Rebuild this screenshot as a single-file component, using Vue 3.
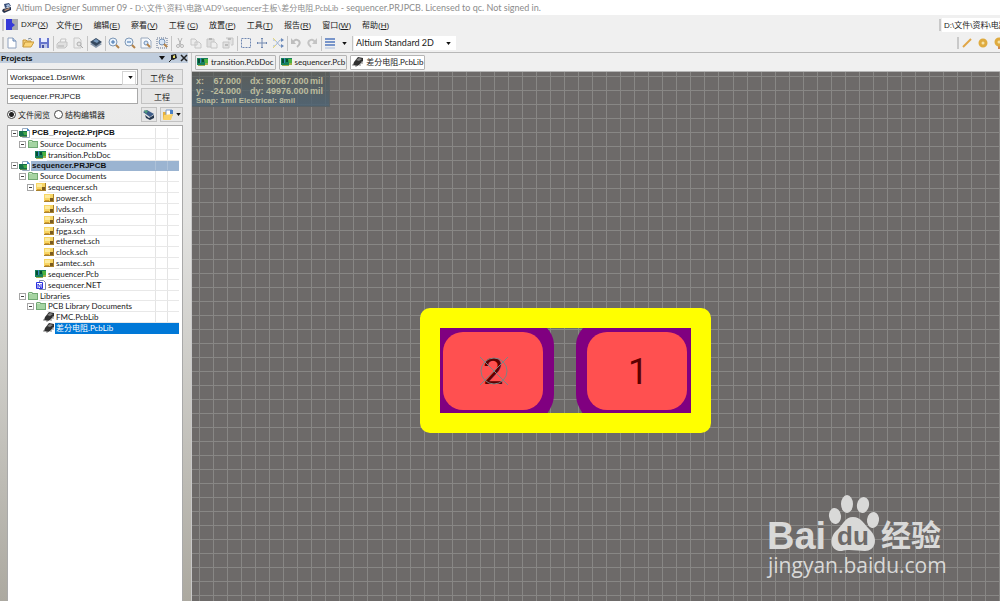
<script setup>
import { ref } from 'vue'

const menus = [
  ['DXP(', 'X', ')'], ['文件(', 'F', ')'], ['编辑(', 'E', ')'], ['察看(', 'V', ')'], ['工程 (', 'C', ')'],
  ['放置(', 'P', ')'], ['工具(', 'T', ')'], ['报告(', 'R', ')'], ['窗口(', 'W', ')'], ['帮助(', 'H', ')'],
]

const toolGroups = [
  [['new', 'New'], ['open', 'Open'], ['save', 'Save']],
  [['print', 'Print'], ['preview', 'Print preview']],
  [['layers', 'Layers']],
  [['zoomin', 'Zoom in'], ['zoomout', 'Zoom out'], ['zoomdoc', 'Fit document'], ['zoomarea', 'Fit area']],
  [['cut', 'Cut'], ['copy', 'Copy'], ['paste', 'Paste'], ['stamp', 'Rubber stamp']],
  [['select', 'Select area'], ['move', 'Move'], ['shuffle', 'Clear filter']],
  [['undo', 'Undo'], ['redo', 'Redo']],
]

const docs = [
  { icon: 'board', name: 'transition.PcbDoc' },
  { icon: 'board', name: 'sequencer.Pcb' },
  { icon: 'chip', name: '差分电阻.PcbLib', active: true },
]

const tree = [
  { level: 0, icon: 'project', name: 'PCB_Project2.PrjPCB', open: true, bold: true },
  { level: 1, icon: 'folder', name: 'Source Documents', open: true },
  { level: 2, icon: 'board', name: 'transition.PcbDoc' },
  { level: 0, icon: 'project', name: 'sequencer.PRJPCB', open: true, bold: true, current: true },
  { level: 1, icon: 'folder', name: 'Source Documents', open: true },
  { level: 2, icon: 'sheet', name: 'sequencer.sch', open: true },
  { level: 3, icon: 'sheet', name: 'power.sch' },
  { level: 3, icon: 'sheet', name: 'lvds.sch' },
  { level: 3, icon: 'sheet', name: 'daisy.sch' },
  { level: 3, icon: 'sheet', name: 'fpga.sch' },
  { level: 3, icon: 'sheet', name: 'ethernet.sch' },
  { level: 3, icon: 'sheet', name: 'clock.sch' },
  { level: 3, icon: 'sheet', name: 'samtec.sch' },
  { level: 2, icon: 'board', name: 'sequencer.Pcb' },
  { level: 2, icon: 'net', name: 'sequencer.NET' },
  { level: 1, icon: 'folder', name: 'Libraries', open: true },
  { level: 2, icon: 'folder', name: 'PCB Library Documents', open: true },
  { level: 3, icon: 'chip', name: 'FMC.PcbLib' },
  { level: 3, icon: 'chip', name: '差分电阻.PcbLib', selected: true },
]

const view = ref('file')
const project = ref('sequencer.PRJPCB')
const path = ref('D:\\文件\\资料\\电路\\AD9')

const pitch = 14.04
const columns = Array.from({ length: 180 }, (_, i) => Math.round(7 + i * pitch))
const rows = Array.from({ length: 120 }, (_, i) => Math.round(4 + i * pitch))
</script>

<template>
  <div class="app">
    <svg class="defs" aria-hidden="true">
      <symbol id="board" viewBox="0 0 12 10">
        <path d="M0 1h11v7H0z" fill="#15805a" /><path d="M1 2h2v4H1zM5 2h2v3H5z" fill="#064c32" />
        <path d="M7 2h4v4H8z" fill="#4db33d" /><path d="M1 8h7v1H1zM8 6h3v2H8z" fill="#9fae4b" /><path d="M3 1h1v5H3z" fill="#3d82c0" />
      </symbol>
      <symbol id="project" viewBox="0 0 12 10">
        <path d="M3.500.5h5l2 2v7h-7z" fill="#fff" stroke="#9aabc0" /><path d="M8 0l3 3H8z" fill="#4a8cd0" />
        <path d="M0 3h8v5H0z" fill="#15704a" /><path d="M4 4h4v3H5z" fill="#43a648" /><path d="M1 8h7v1H1z" fill="#5d8a56" />
      </symbol>
      <symbol id="folder" viewBox="0 0 12 10">
        <path d="M1 2l1-1h3l1 1h5v7H1z" fill="#71a873" /><path d="M2 3h8v5H2z" fill="#a5d4a2" /><path d="M2 2h3v1H2z" fill="#cbe8c6" />
      </symbol>
      <symbol id="sheet" viewBox="0 0 12 10">
        <path d="M1 1h10v8H1z" fill="#a9822c" /><path d="M1 1h9v7H1z" fill="#f7d564" /><path d="M2 2h5v3H2z" fill="#fdeb9f" />
        <path d="M7 5h3v3H7z" fill="#7a5b20" /><path d="M2 7h4v1H2z" fill="#d89d2c" />
      </symbol>
      <symbol id="net" viewBox="0 0 12 10">
        <path d="M4.500.5h4l2 2v7h-6z" fill="#fff" stroke="#7f8ca8" /><path d="M1.500 2.500h6v6h-6z" fill="#fff" stroke="#2a31e0" />
        <path d="M3 8V4l3 4V4" fill="none" stroke="#2a31e0" />
      </symbol>
      <symbol id="chip" viewBox="0 0 12 10">
        <path d="M2 5l4-5 5 1v3L7 8l-2 1-4-1z" fill="#303030" /><path d="M4 3l3-2 3 1-3 2z" fill="#858585" />
        <path d="M1 7v2M4 8v2M8 7v2M10 4v3" stroke="#808080" />
      </symbol>
      <symbol id="new" viewBox="0 0 12 12"><path d="M2 1h5l3 3v7H2z" fill="#fff" stroke="#8ea0bd" /><path d="M7 1v3h3" fill="#cdd9ec" stroke="#6b88b5" /></symbol>
      <symbol id="open" viewBox="0 0 12 12"><path d="M1 10V3h3l1 1h4v2" fill="#f4cf78" stroke="#c39337" /><path d="M1 10l2-5h9l-3 5z" fill="#fbd578" stroke="#c99a3d" /><path d="M6 2q3-2 4 1" fill="none" stroke="#7b8b9b" /></symbol>
      <symbol id="save" viewBox="0 0 12 12"><path d="M1 1h10v10H1z" fill="#6876cc" /><path d="M3 1h6v4H3z" fill="#e9edff" /><path d="M3 7h6v4H3z" fill="#bfc6e7" /><path d="M4 8h2v3H4z" fill="#4652a2" /></symbol>
      <symbol id="print" viewBox="0 0 12 12"><path d="M4 6l1-4h5L9 6z" fill="#f5f5f5" stroke="#c4c4c4" /><path d="M1 7l2-2h8v4l-2 2H1z" fill="#e0e0e0" stroke="#c4c4c4" /><path d="M2 9h6" stroke="#b0b0b0" /></symbol>
      <symbol id="preview" viewBox="0 0 12 12"><path d="M2 1h5l2 2v8H2z" fill="#eee" stroke="#c8c8c8" /><circle cx="7" cy="7" r="2" fill="#e4e4e4" stroke="#b0b0b0" /><path d="M8 8l3 3" stroke="#aaa" /></symbol>
      <symbol id="layers" viewBox="0 0 12 12"><path d="M0 7l6 4 6-4-6-3z" fill="#8394a8" /><path d="M0 5l6 4 6-4-6-4z" fill="#35485f" /><path d="M3 4l4 2 2-2-3-2z" fill="#7697ba" /></symbol>
      <symbol id="zoomin" viewBox="0 0 12 12"><circle cx="5" cy="5" r="4" fill="#e9f2fc" stroke="#7e98b6" /><path d="M3 5h4M5 3v4" stroke="#3f70ac" /><path d="M8 8l3 3" stroke="#b4834a" stroke-width="2" /></symbol>
      <symbol id="zoomout" viewBox="0 0 12 12"><circle cx="5" cy="5" r="4" fill="#e9f2fc" stroke="#7e98b6" /><path d="M3 5h4" stroke="#3f70ac" /><path d="M8 8l3 3" stroke="#b4834a" stroke-width="2" /></symbol>
      <symbol id="zoomdoc" viewBox="0 0 12 12"><path d="M1 1h7l3 3v7H1z" fill="#f7f9fc" stroke="#9aa9bd" /><circle cx="6" cy="6" r="2" fill="#dbe8f8" stroke="#6f8fb6" /><path d="M7 7l3 3" stroke="#b4834a" stroke-width="2" /></symbol>
      <symbol id="zoomarea" viewBox="0 0 12 12"><path d="M1 1h10v10H1z" fill="none" stroke="#5c6f8d" stroke-dasharray="1 1" /><circle cx="6" cy="5" r="3" fill="#d6e5f7" stroke="#7693b6" /><path d="M8 7l3 3" stroke="#b4834a" stroke-width="2" /></symbol>
      <symbol id="cut" viewBox="0 0 12 12"><path d="M4 1l3 7M8 1L5 8" stroke="#b5b5b5" /><circle cx="4" cy="9" r="1.500" fill="none" stroke="#b5b5b5" /><circle cx="8" cy="9" r="1.500" fill="none" stroke="#b5b5b5" /></symbol>
      <symbol id="copy" viewBox="0 0 12 12"><path d="M1 2h4l2 2v4H1zM5 5h4l2 2v4H5z" fill="#ececec" stroke="#c6c6c6" /></symbol>
      <symbol id="paste" viewBox="0 0 12 12"><path d="M1 2h7v8H1z" fill="#ddd" stroke="#c6c6c6" /><path d="M3 1h3v2H3z" fill="#b5b5b5" /><path d="M5 5h4l2 2v4H5z" fill="#eee" stroke="#c6c6c6" /></symbol>
      <symbol id="stamp" viewBox="0 0 12 12"><path d="M4 1h7v7H9M1 5h6v6H1z" fill="#e2e2e2" stroke="#c4c4c4" /><path d="M6 1h3v2H6zM3 7h3v2H3z" fill="#bbb" /></symbol>
      <symbol id="select" viewBox="0 0 12 12"><path d="M1.500 1.500h9v9h-9z" fill="none" stroke="#7088b2" stroke-dasharray="2 1" /></symbol>
      <symbol id="move" viewBox="0 0 12 12"><path d="M6 1v10M1 6h10" stroke="#7088b0" /><path d="M5 2l1-1 1 1M5 10l1 1 1-1M2 5L1 6l1 1M10 5l1 1-1 1" fill="none" stroke="#7088b0" /></symbol>
      <symbol id="shuffle" viewBox="0 0 12 12"><path d="M1 3h2l5 6h3M1 9h2l5-6h3" fill="none" stroke="#9db3d5" /><path d="M9 1l3 2-3 2zM9 7l3 2-3 2z" fill="#6b8aba" /><path d="M1 1l3 3M1 11l3-3" stroke="#e7d878" /></symbol>
      <symbol id="undo" viewBox="0 0 12 12"><path d="M3 5q3-4 6-1 2 3-2 6" fill="none" stroke="#bdbdbd" stroke-width="2" /><path d="M1 1v6h5z" fill="#bdbdbd" /></symbol>
      <symbol id="redo" viewBox="0 0 12 12"><path d="M9 5Q6 1 3 4q-2 3 2 6" fill="none" stroke="#c4c4c4" stroke-width="2" /><path d="M11 1v6H6z" fill="#c4c4c4" /></symbol>
      <symbol id="lines" viewBox="0 0 12 12"><path d="M1 2h10M1 5h10M1 8h10" stroke="#7895ca" stroke-width="2" /><path d="M1 11h10" stroke="#aabddd" /></symbol>
      <symbol id="caret" viewBox="0 0 6 4"><path d="M0 0h6L3 4z" fill="#111" /></symbol>
    </svg>

    <header class="title">
      <svg class="logo" viewBox="0 0 12 10" aria-hidden="true"><path d="M2 6l8-2v3l-7 3-2-2z" fill="#26324b" /><path d="M3 1l5-1 2 3-6 2z" fill="#344a74" /><path d="M5 2l3-1 1 2-3 1z" fill="#a6bfe0" /><path d="M3 7l5-2 1 1-5 2z" fill="#c2906f" /></svg>
      <h1>Altium Designer Summer 09 - <span>D:\文件\资料\电路\AD9\sequencer主板\差分电阻.PcbLib</span> - sequencer.PRJPCB. Licensed to qc. Not signed in.</h1>
    </header>

    <nav class="menubar">
      <span class="grip"></span>
      <svg class="dxp" viewBox="0 0 12 11" aria-hidden="true"><path d="M0 0h6v11H0z" fill="#3539d8" /><path d="M6 0h6v11H6z" fill="#a4a7ad" /><path d="M4 2l5 4-5 4z" fill="#3539d8" /></svg>
      <button v-for="m in menus" :key="m[1]" type="button">{{ m[0] }}<u>{{ m[1] }}</u>{{ m[2] }}</button>
      <span class="spring"></span>
      <span class="grip"></span>
      <input v-model="path" class="path" aria-label="Document path" />
    </nav>

    <div class="toolbar" role="toolbar">
      <span class="grip"></span>
      <template v-for="(group, g) in toolGroups" :key="g">
        <button v-for="t in group" :key="t[0]" type="button" :aria-label="t[1]"><svg><use :href="'#' + t[0]" /></svg></button>
        <span class="sep"></span>
      </template>
      <button type="button" aria-label="Grid"><svg><use href="#lines" /></svg></button>
      <button type="button" class="drop" aria-label="Grid options"><svg><use href="#caret" /></svg></button>
      <span class="sep"></span>
      <span class="style">
        <select aria-label="View configuration"><option>Altium Standard 2D</option></select>
        <svg><use href="#caret" /></svg>
      </span>
      <span class="spring"></span>
      <div class="place">
        <span class="grip"></span>
        <button type="button" aria-label="Place line"><svg viewBox="0 0 12 12"><path d="M2 10l8-8" stroke="#e0a546" stroke-width="2" /></svg></button>
        <button type="button" aria-label="Place pad"><svg viewBox="0 0 12 12"><circle cx="6" cy="6" r="3" fill="#f5e3a8" stroke="#dfab3f" stroke-width="3" /></svg></button>
        <button type="button" aria-label="Place via"><svg viewBox="0 0 12 12"><path d="M5 7h4v5H5z" fill="#d08a50" /><circle cx="6" cy="5" r="3" fill="#f5e3a8" stroke="#dfab3f" stroke-width="3" /></svg></button>
      </div>
    </div>

    <main>
      <aside>
        <div class="caption">
          <h2>Projects</h2>
          <button type="button" aria-label="Panel menu"><svg viewBox="0 0 8 8"><path d="M1 2h6L4 6z" fill="#111" /></svg></button>
          <button type="button" aria-label="Pin"><svg viewBox="0 0 8 8"><path d="M2 1l5-1 1 4-4 2-2-1z" fill="#222" /><path d="M4 2l2-1v3L4 4z" fill="#e8e070" /><path d="M0 8l3-3" stroke="#222" /></svg></button>
          <button type="button" aria-label="Close"><svg viewBox="0 0 8 8"><path d="M1 1l6 6M7 1L1 7" stroke="#222" stroke-width="1.500" /></svg></button>
        </div>
        <form @submit.prevent>
          <span class="combo">
            <select aria-label="Workspace"><option>Workspace1.DsnWrk</option></select>
            <svg><use href="#caret" /></svg>
          </span>
          <button type="button">工作台</button>
          <input v-model="project" type="text" aria-label="Project" />
          <button type="button">工程</button>
          <div class="views">
            <label><input v-model="view" type="radio" value="file" />文件阅览</label>
            <label><input v-model="view" type="radio" value="structure" />结构编辑器</label>
          </div>
          <div class="pair">
            <button type="button" aria-label="Refresh"><svg viewBox="0 0 12 12"><path d="M0 3l4-2 7 4-4 3z" fill="#3e5d88" /><path d="M2 6l4 3 5-3v3l-4 2-4-2z" fill="#26384f" /><path d="M1 1l4 1-2 3z" fill="#4fa07a" /></svg></button>
            <button type="button" class="wide" aria-label="Options"><svg viewBox="0 0 12 12"><path d="M1 3h5v7H1z" fill="#e8b13b" /><path d="M4 1h6v6H4z" fill="#fff" stroke="#7b98c4" /><path d="M2 6l9-1-2 6H1z" fill="#fbd165" /><path d="M8 1h3v4H8z" fill="#4a80c6" /></svg><svg class="mini"><use href="#caret" /></svg></button>
          </div>
        </form>
        <div class="tree">
          <ul>
            <li v-for="(n, i) in tree" :key="i" :class="{ bold: n.bold, current: n.current, selected: n.selected }" :style="{ paddingLeft: 3 + n.level * 8 + 'px' }">
              <span class="expander" :class="{ open: n.open }"></span>
              <svg class="ico"><use :href="'#' + n.icon" /></svg>
              <span class="cells"><span class="name">{{ n.name }}</span><i></i><i></i></span>
            </li>
          </ul>
        </div>
      </aside>

      <section class="work">
        <div class="tabs">
          <button v-for="d in docs" :key="d.name" type="button" :class="{ active: d.active }"><svg class="ico"><use :href="'#' + d.icon" /></svg>{{ d.name }}</button>
        </div>
        <div class="canvas">
          <svg class="board" role="img" aria-label="Footprint">
            <g fill="#888785">
              <rect v-for="x in columns" :key="'c' + x" :x="x" y="0" width="1" height="100%" />
              <rect v-for="y in rows" :key="'r' + y" x="0" :y="y" width="100%" height="1" />
            </g>
            <path d="M247 256h108l3 4q4 6 4 14v48q0 8-4 15l-3 5H247z" fill="#800080" />
            <path d="M499 256H391l-3 4q-4 6-4 14v48q0 8 4 15l3 5h108z" fill="#800080" />
            <rect x="238" y="246" width="271" height="105" fill="none" stroke="#ff0" stroke-width="20" stroke-linejoin="round" />
            <rect x="251" y="260" width="100" height="78" rx="20" fill="#ff5050" />
            <rect x="395" y="260" width="100" height="78" rx="20" fill="#ff5050" />
            <text x="301" y="312" class="pin">2</text>
            <text x="446" y="312" class="pin">1</text>
            <g fill="none" stroke="#7d8484"><circle cx="302" cy="299" r="13" /><path d="M288 285l28 28M316 285l-28 28" /></g>
          </svg>
          <div class="hud">
            <span>x:</span><span class="num">67.000</span><span>dx:</span><span>50067.000</span><span>mil</span>
            <span>y:</span><span class="num">-24.000</span><span>dy:</span><span>49976.000</span><span>mil</span>
            <small>Snap: 1mil Electrical: 8mil</small>
          </div>
          <svg class="mark" viewBox="0 0 180 90" role="img" aria-label="Baidu Jingyan">
            <g fill="#d9d9d8">
              <text x="0" y="54" class="bai">Bai</text>
              <g transform="translate(-1 -3)">
                <ellipse cx="69" cy="24" rx="6" ry="8" transform="rotate(-8 69 24)" />
                <ellipse cx="81" cy="12" rx="6" ry="9" />
                <ellipse cx="97" cy="13" rx="6" ry="8" transform="rotate(12 97 13)" />
                <ellipse cx="107" cy="28" rx="6" ry="8" transform="rotate(8 107 28)" />
                <path d="M87 25c8 0 11 7 17 13 9 9 5 21-5 21-6 0-17-2-23 0-11 1-14-12-6-20 7-6 9-14 17-14z" />
              </g>
              <text x="114" y="51" class="jy">经验</text>
              <text x="1" y="78" class="url">jingyan.baidu.com</text>
            </g>
            <text x="86" y="50" class="du">du</text>
          </svg>
        </div>
      </section>
    </main>
  </div>
</template>

<style>
html, body, #app { height: 100%; }
body { margin: 0; overflow: hidden; }
</style>

<style scoped>
* { box-sizing: border-box; }
.app { display: flex; flex-direction: column; height: 100%; background: #f0f0f0; color: #222; font-family: "Liberation Sans", "Noto Sans CJK SC", sans-serif; font-size: 8px; }
button, input, select { font: inherit; color: inherit; margin: 0; padding: 0; border: 0; background: none; min-width: 0; }
select { appearance: none; width: 100%; }
h1, h2, ul { margin: 0; padding: 0; font-size: inherit; }
.defs { position: absolute; width: 0; height: 0; }
.title { display: flex; align-items: center; gap: 3px; height: 15px; flex: none; padding-left: 1px; background: #fff; }
.title h1 { font: 400 9px/15px Lato, "Noto Sans CJK SC", sans-serif; color: #8c8c8c; white-space: nowrap; }
.title h1 span { font-size: 8px; }
.logo { width: 12px; height: 10px; }
.grip { flex: none; width: 2px; height: 12px; background: #c9c9c9; }
.spring { flex: 1; }
.menubar { display: flex; align-items: center; height: 19px; flex: none; padding-left: 2px; }
.menubar button { margin-right: 11px; white-space: nowrap; }
.menubar button:first-of-type { margin-right: 8px; }
.dxp { width: 12px; height: 11px; margin: 0 3px 0 2px; flex: none; }
.path { width: 58px; height: 14px; margin-left: 1px; padding-left: 2px; background: #fff; }
.toolbar { display: flex; align-items: center; height: 19px; flex: none; padding-left: 2px; border-bottom: 1px solid #b8b8b8; }
.toolbar button { display: flex; justify-content: center; align-items: center; width: 16px; height: 16px; flex: none; }
.toolbar button svg { width: 12px; height: 12px; }
.toolbar .drop { width: 13px; }
.toolbar .drop svg { width: 5px; height: 3px; }
.sep { width: 2px; height: 15px; flex: none; border-right: 1px solid #c4c4c4; }
.style { position: relative; width: 102px; height: 14px; margin-left: 1px; background: #fff; }
.style select { height: 14px; padding-left: 2px; font: 9px/14px Lato, sans-serif; display: block; }
.style svg, .combo svg { position: absolute; right: 5px; top: 6px; width: 5px; height: 3px; pointer-events: none; }
.place { display: flex; align-items: center; width: 43px; overflow: hidden; }
main { display: flex; flex: 1; min-height: 0; }
aside { display: flex; flex-direction: column; width: 192px; flex: none; background: linear-gradient(#efeff0, #e3e3e1 30%, #aca9a0); border-right: 1px solid #c8c8c8; }
.caption { display: flex; align-items: center; gap: 3px; height: 10px; flex: none; margin-right: 3px; background: #c0cddd; padding-left: 1px; }
.caption h2 { flex: 1; font-weight: 700; line-height: 9px; color: #111; }
.caption button { display: flex; width: 8px; height: 8px; }
.caption svg { width: 8px; height: 8px; }
form { display: grid; grid-template-columns: 1fr 42px; gap: 3px; padding: 6px 8px 0 7px; grid-template-rows: 16px 16px 15px; }
form button { border: 1px solid #c2c2c2; background: #e6e6e6; }
form > input, .combo { border: 1px solid #a9a9a9; background: #fff; padding-left: 2px; }
.combo { position: relative; display: block; }
.combo select { display: block; height: 14px; }
.combo svg { right: 4px; }
.combo::after { content: ""; position: absolute; right: 1px; top: 1px; width: 12px; height: 12px; border: 1px solid #d5d5d5; pointer-events: none; }
.views { display: flex; align-items: center; gap: 4px; white-space: nowrap; }
.views label { display: flex; align-items: center; gap: 2px; }
.views input { appearance: none; width: 9px; height: 9px; flex: none; border: 1px solid #444; border-radius: 50%; background: #fff; }
.views input:checked { background: radial-gradient(#222 0 2px, #fff 3px); }
.pair { display: flex; gap: 3px; }
.pair button { display: flex; align-items: center; justify-content: center; width: 16px; }
.pair .wide { width: 23px; gap: 2px; }
.pair svg { width: 12px; height: 12px; flex: none; }
.pair .mini { width: 5px; height: 3px; }
.tree { flex: 1; margin: 3px 8px 0 7px; padding: 2px 3px 0 0; background: #fff; border: 1px solid #a9a9a9; border-bottom: 0; }
.tree ul { display: grid; grid-auto-rows: 1fr; height: 206px; list-style: none; }
li { display: flex; align-items: stretch; min-height: 0; }
.expander { width: 7px; flex: none; align-self: center; margin-right: 1px; }
.expander.open { height: 7px; border: 1px solid #a5a5a5; background: linear-gradient(#444, #444) center / 3px 1px no-repeat; }
.ico { width: 12px; height: 10px; flex: none; }
.cells { display: flex; flex: 1; min-width: 0; border-bottom: 1px solid #e8e8e8; }
.name { flex: 1; padding-left: 1px; font: 8px/10px Lato, "Noto Sans CJK SC", sans-serif; white-space: nowrap; }
.cells i { width: 12px; border-left: 1px solid #e4e4e4; }
.bold .name { font: 700 8px/10px "Liberation Sans", sans-serif; color: #111; }
.current .cells { background: #9bb4d1; border-color: #9bb4d1; }
.current i { border-color: #adc1d8; }
.selected .cells { background: #0078d7; border-color: #0078d7; color: #fff; }
.selected i { border-color: #0078d7; }
.work { display: flex; flex-direction: column; flex: 1; min-width: 0; }
.tabs { display: flex; align-items: center; gap: 3px; height: 19px; flex: none; padding-left: 3px; border-bottom: 1px solid #b5b5b5; }
.tabs button { display: flex; align-items: center; gap: 2px; height: 15px; padding: 0 1px; border: 1px solid #b5b5b5; border-radius: 1px; font: 8px/13px Lato, "Noto Sans CJK SC", sans-serif; white-space: nowrap; }
.tabs .active { background: #fff; }
.canvas { position: relative; flex: 1; min-height: 0; overflow: hidden; background: #6d6a69; }
.board { display: block; width: 100%; height: 100%; }
.pin { font: 36px Roboto, sans-serif; fill: #5c0000; text-anchor: middle; }
.hud { position: absolute; left: 0; top: 0; display: grid; grid-template-columns: 14px 40px 16px 44px 17px; grid-template-rows: 11px 10px 9px; align-items: center; width: 138px; padding: 3px 0 1px 4px; background: linear-gradient(rgba(80, 85, 80, 0.6), rgba(76, 98, 114, 0.85)); border: solid #5b6265; border-width: 0 1px 1px 0; color: #bcbc9e; font-weight: 700; font-size: 9px; white-space: nowrap; }
.num { text-align: right; padding-right: 9px; }
.hud small { grid-column: 1 / -1; font-size: 8px; }
.mark { position: absolute; right: 53px; bottom: 16px; width: 180px; height: 90px; overflow: visible; }
.bai { font: 700 38px "Liberation Sans", sans-serif; }
.jy { font: 700 30px "Noto Sans CJK SC", sans-serif; }
.url { font: 21px "Open Sans", sans-serif; }
.du { font: 700 26px "Liberation Sans", sans-serif; fill: #6d6a69; text-anchor: middle; }
</style>
